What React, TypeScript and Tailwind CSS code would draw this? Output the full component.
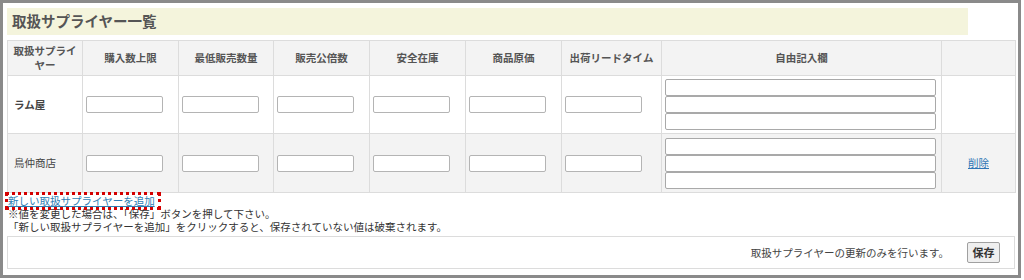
import React from 'react';

const columns = ['購入数上限', '最低販売数量', '販売公倍数', '安全在庫', '商品原価', '出荷リードタイム'];

const suppliers = [
    { name: 'ラム屋', canDelete: false },
    { name: '鳥仲商店', canDelete: true },
];

const TextBox: React.FC<{ wide?: boolean }> = ({ wide }) => (
    <input
        type="text"
        className={
            wide
                ? 'block w-[271px] h-[17px] border border-[#a9a9a9] rounded-[2px] bg-white'
                : 'block w-[77px] h-[17px] border border-[#b4b4b4] rounded-[2px] bg-white'
        }
    />
);

export default function App() {
    return (
        <div className="w-[1021px] h-[278px] border-[3px] border-[#8a8a8a] bg-white pt-[5px] pl-[4px] pr-[3px] font-['Noto_Sans_CJK_JP',sans-serif] text-[#333]">
            {/* Title */}
            <div className="w-[961px] h-[27px] bg-[#f4f4dc] flex items-center pl-[5px]">
                <h1 className="text-[14.5px] font-bold text-[#555] leading-none">取扱サプライヤー一覧</h1>
            </div>

            {/* Supplier table */}
            <table className="mt-[5px] w-[1008px] table-fixed border-collapse text-[10.5px]">
                <colgroup>
                    <col className="w-[75px]" />
                    <col className="w-[96px]" />
                    <col className="w-[95px]" />
                    <col className="w-[96px]" />
                    <col className="w-[96px]" />
                    <col className="w-[96px]" />
                    <col className="w-[100px]" />
                    <col className="w-[280px]" />
                    <col className="w-[74px]" />
                </colgroup>
                <thead>
                    <tr className="h-[35px] bg-[#f3f3f3]">
                        <th className="border border-[#dcdcdc] font-bold text-[#555] leading-[14px] px-1">取扱サプライヤー</th>
                        {columns.map((c) => (
                            <th key={c} className="border border-[#dcdcdc] font-bold text-[#555] whitespace-nowrap">{c}</th>
                        ))}
                        <th className="border border-[#dcdcdc] font-bold text-[#555]">自由記入欄</th>
                        <th className="border border-[#dcdcdc]"></th>
                    </tr>
                </thead>
                <tbody>
                    {suppliers.map((s, i) => (
                        <tr key={s.name} className={i === 0 ? 'h-[58px] bg-white' : 'h-[59px] bg-[#f3f3f3]'}>
                            <td className={`border border-[#dcdcdc] pl-[6px] text-[#444] ${i === 0 ? 'font-semibold' : ''}`}>{s.name}</td>
                            {columns.map((c) => (
                                <td key={c} className="border border-[#dcdcdc] pl-[3px]">
                                    <TextBox />
                                </td>
                            ))}
                            <td className="border border-[#dcdcdc] pl-[3px]">
                                <div className="flex flex-col">
                                    <TextBox wide />
                                    <TextBox wide />
                                    <TextBox wide />
                                </div>
                            </td>
                            <td className="border border-[#dcdcdc] text-center">
                                {s.canDelete && (
                                    <a href="#" className="text-[#2f75b5] underline">削除</a>
                                )}
                            </td>
                        </tr>
                    ))}
                </tbody>
            </table>

            {/* Add link + notes */}
            <div className="text-[10.5px] leading-[13px] pl-[1px] pt-[1px]">
                <div className="h-[13px]">
                    <span className="relative inline-block">
                        <a href="#" className="text-[#2f7fb5] underline">新しい取扱サプライヤーを追加</a>
                        <span className="absolute -left-[3px] -right-[6px] -top-[2px] -bottom-[3px] border-[3px] border-dotted border-[#d40000] pointer-events-none" />
                    </span>
                </div>
                <p>※値を変更した場合は、「保存」ボタンを押して下さい。</p>
                <p>「新しい取扱サプライヤーを追加」をクリックすると、保存されていない値は破棄されます。</p>
            </div>

            {/* Footer */}
            <div className="mt-[3px] w-[1008px] h-[33px] border border-[#dcdcdc] flex items-center justify-end pr-[14px] gap-[18px]">
                <span className="text-[10.5px] text-[#444]">取扱サプライヤーの更新のみを行います。</span>
                <button className="w-[33px] h-[21px] border border-[#a0a0a0] rounded-[2px] bg-[#efefef] text-[11px] font-semibold text-[#333] leading-none">保存</button>
            </div>
        </div>
    );
}
